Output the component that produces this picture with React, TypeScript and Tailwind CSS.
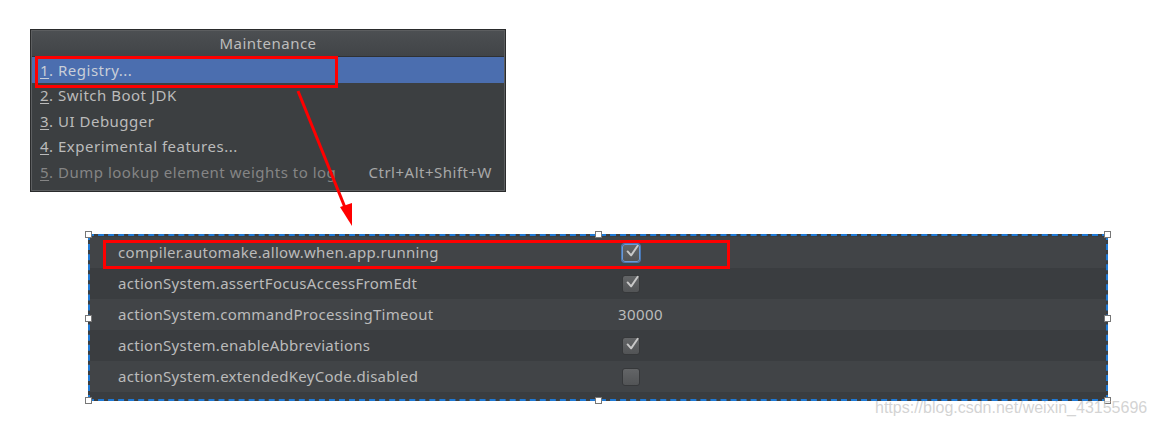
import React from "react";

const F = "font-['Noto_Sans',sans-serif]";

function Check({ checked = true, focused = false }: { checked?: boolean; focused?: boolean }) {
  return (
    <div
      className={`w-[18px] h-[18px] rounded-[3px] flex items-center justify-center bg-gradient-to-b from-[#636567] to-[#525456] border ${
        focused ? "border-[#6b9ad6] shadow-[0_0_0_1px_#4a78b5]" : "border-[#36383a]"
      }`}
    >
      {checked && (
        <svg width="16" height="16" viewBox="0 0 16 16" className="-mt-[3px] ml-[2px]">
          <path d="M3 8.5 L7 13 L14.5 2" fill="none" stroke="#c8c8c8" strokeWidth="2.2" strokeLinecap="round" strokeLinejoin="round" />
        </svg>
      )}
    </div>
  );
}

function Handle({ x, y }: { x: number; y: number }) {
  return (
    <div
      className="absolute w-[7px] h-[7px] bg-white border border-[#777]"
      style={{ left: x - 3, top: y - 3 }}
    />
  );
}

const menuItems = [
  { n: "1", t: "Registry...", active: true },
  { n: "2", t: "Switch Boot JDK" },
  { n: "3", t: "UI Debugger" },
  { n: "4", t: "Experimental features..." },
  { n: "5", t: "Dump lookup element weights to log", disabled: true, sc: "Ctrl+Alt+Shift+W" },
];

const rows: { k: string; v: React.ReactNode }[] = [
  { k: "compiler.automake.allow.when.app.running", v: <Check focused /> },
  { k: "actionSystem.assertFocusAccessFromEdt", v: <Check /> },
  { k: "actionSystem.commandProcessingTimeout", v: <span className="text-[#bcbcbc] text-[15px] tracking-[0.4px] -ml-[4px]">30000</span> },
  { k: "actionSystem.enableAbbreviations", v: <Check /> },
  { k: "actionSystem.extendedKeyCode.disabled", v: <Check checked={false} /> },
];

export default function App() {
  return (
    <div className={`relative w-[1156px] h-[424px] bg-white overflow-hidden ${F}`}>
      {/* Menu */}
      <div className="pt-[29px] pl-[30px]">
        <div className="w-[476px] h-[163px] border border-[#2a2b2c] bg-[#3c3f41]">
          <div className="h-full border border-[#5c5e60] flex flex-col">
            <div className="h-[26px] flex items-center justify-center bg-gradient-to-b from-[#4c4f52] to-[#414447] border-b border-[#2f3133] text-[#bdbdbd] text-[15px] tracking-[0.5px]">
              Maintenance
            </div>
            {menuItems.map((m) => (
              <div
                key={m.n}
                className={`h-[25.5px] flex items-center pl-[8px] pr-[12px] text-[15px] tracking-[0.5px] ${
                  m.active ? "bg-[#4b6eaf] text-[#c9cfd8]" : m.disabled ? "text-[#858585]" : "text-[#bbbbbb]"
                }`}
              >
                <span className="underline underline-offset-2">{m.n}</span>
                <span>.&nbsp;{m.t}</span>
                {m.sc && <span className="ml-auto text-[#a8a8a8]">{m.sc}</span>}
              </div>
            ))}
          </div>
        </div>
      </div>

      {/* Registry table */}
      <div className="ml-[88px] mt-[42px] w-[1020px] h-[167px] border-2 border-dashed border-[#1f7ad6] bg-[#3b3e41] overflow-hidden">
        <div className="pt-[1px] flex flex-col">
          {rows.map((r, i) => (
            <div
              key={r.k}
              className={`h-[31px] flex items-center text-[15px] tracking-[0.3px] text-[#bbbbbb] ${i % 2 === 0 ? "bg-[#414447]" : "bg-[#3a3d40]"}`}
            >
              <div className="pl-[28px] w-[532px]">{r.k}</div>
              <div className="flex items-center">{r.v}</div>
            </div>
          ))}
          <div className="h-[31px] bg-[#3a3d40] flex items-center">
            <div className="w-[560px]" />
            <Check />
          </div>
        </div>
      </div>

      {/* annotation overlays */}
      <div className="absolute left-[35px] top-[56px] w-[303px] h-[32px] border-[3px] border-[#f00]" />
      <div className="absolute left-[103px] top-[240px] w-[627px] h-[29px] border-[3px] border-[#f00]" />

      <svg className="absolute left-0 top-0" width="1156" height="424">
        <line x1="298" y1="91" x2="346" y2="210" stroke="#f00" strokeWidth="3" />
        <polygon points="352,226 340,207 352,203" fill="#f00" />
      </svg>

      {[
        [88, 234],
        [598, 234],
        [1107, 234],
        [88, 318],
        [1107, 318],
        [88, 400],
        [598, 400],
        [1107, 400],
      ].map(([x, y]) => (
        <Handle key={`${x}-${y}`} x={x} y={y} />
      ))}

      <div className="absolute left-[875px] top-[396px] text-[16px] text-[#c8c8c8]/80 font-['Liberation_Sans',sans-serif]">
        https://blog.csdn.net/weixin_43155696
      </div>
    </div>
  );
}
